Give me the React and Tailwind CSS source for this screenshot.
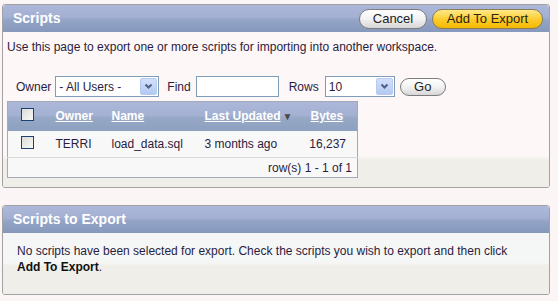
import React from 'react';

const font = { fontFamily: '"Liberation Sans", Arial, sans-serif' };

const Checkbox = () => (
  <span className="inline-block w-[13px] h-[13px] border border-[#1c4273] bg-[linear-gradient(135deg,#dcdcd6,#f8f8f6)]"></span>
);

const SelectBox = ({ value, width }) => (
  <div className={`flex items-center h-[21px] border border-[#7f9db9] bg-white pl-[3px] pr-[1px] ${width}`}>
    <span className="flex-1 text-[12px] text-[#2a1c40] leading-none">{value}</span>
    <span className="flex items-center justify-center w-[17px] h-[17px] rounded-[2px] border border-[#b8cbee] bg-[linear-gradient(to_bottom,#d3e0fb,#b3c9f3)]">
      <svg width="9" height="7" viewBox="0 0 9 7">
        <path d="M1.5 1.5 L4.5 4.5 L7.5 1.5" stroke="#4d6185" strokeWidth="2" fill="none" />
      </svg>
    </span>
  </div>
);

const PillButton = ({ children, yellow, className = '' }) => (
  <button
    className={`rounded-full border text-[13px] leading-none ${
      yellow
        ? 'border-[#8b7c52] bg-[linear-gradient(to_bottom,#ffe98a,#fccb2a_55%,#f5b800)] text-[#2a2410]'
        : 'border-[#7c7c7c] bg-[linear-gradient(to_bottom,#ffffff,#f2f2f2_50%,#d6d6d6)] text-[#222]'
    } ${className}`}
  >
    {children}
  </button>
);

const PanelHeader = ({ title, children }) => (
  <div className="flex items-center justify-between h-[27px] pl-[10px] pr-[6px] rounded-t-[3px] bg-[linear-gradient(to_bottom,#adb7da,#a3b0d2_45%,#93a4c6_55%,#8698bc)]">
    <span className="text-[14px] font-bold text-white">{title}</span>
    <div className="flex gap-[5px]">{children}</div>
  </div>
);

const App = () => {
  return (
    <div className="w-[558px] h-[301px] bg-[#fcf5f5] pt-[4px] pl-[2px] pr-[8px] overflow-hidden" style={font}>
      {/* Scripts region */}
      <div className="border border-[#a2a2a2] rounded-[3px] overflow-hidden">
        <PanelHeader title="Scripts">
          <PillButton className="w-[68px] h-[20px]">Cancel</PillButton>
          <PillButton yellow className="w-[111px] h-[20px]">Add To Export</PillButton>
        </PanelHeader>
        <div className="h-[155px] bg-[linear-gradient(to_top,#efeee8_26px,#f6f3ee_29px,#fdf7f7_31px)] pt-[8px] px-[4px]">
          <p className="text-[12px] text-[#2a1c40] leading-[14px]">
            Use this page to export one or more scripts for importing into another workspace.
          </p>
          <div className="flex items-center mt-[22px] pl-[9px] text-[12px] text-[#2a1c40]">
            <span>Owner</span>
            <SelectBox value="- All Users -" width="w-[104px] ml-[4px]" />
            <span className="ml-[8px]">Find</span>
            <input className="ml-[5px] w-[83px] h-[21px] border border-[#7f9db9] bg-white" />
            <span className="ml-[10px]">Rows</span>
            <SelectBox value="10" width="w-[70px] ml-[6px]" />
            <PillButton className="ml-[5px] w-[46px] h-[18px] text-[12px]">Go</PillButton>
          </div>
          <table className="mt-[4px] w-[351px] border border-[#a4a9b8] border-collapse text-[12px] text-[#2a1c40]">
            <thead>
              <tr className="h-[29px] bg-[linear-gradient(to_bottom,#acb7da,#a4b1d3_45%,#96a8c6_55%,#8da0bf)]">
                <th className="w-[40px] text-center pt-[2px]"><Checkbox /></th>
                <th className="w-[56px] text-left pl-[8px] font-bold"><span className="text-white underline">Owner</span></th>
                <th className="w-[93px] text-left pl-[8px] font-bold"><span className="text-white underline">Name</span></th>
                <th className="w-[106px] text-left pl-[8px] font-bold whitespace-nowrap">
                  <span className="text-white underline">Last Updated</span>
                  <span className="text-[#4a4a4a] text-[10px] ml-[2px]">▼</span>
                </th>
                <th className="text-left pl-[8px] font-bold"><span className="text-white underline">Bytes</span></th>
              </tr>
            </thead>
            <tbody className="bg-[#f8f8f8]">
              <tr className="h-[27px]">
                <td className="text-center pt-[2px]"><Checkbox /></td>
                <td className="pl-[8px]">TERRI</td>
                <td className="pl-[8px]">load_data.sql</td>
                <td className="pl-[8px]">3 months ago</td>
                <td className="text-right pr-[11px]">16,237</td>
              </tr>
              <tr className="h-[20px] border-t border-[#d8d8d8]">
                <td colSpan={5} className="text-right pr-[5px]">row(s) 1 - 1 of 1</td>
              </tr>
            </tbody>
          </table>
        </div>
      </div>

      {/* Scripts to Export region */}
      <div className="mt-[17px] border border-[#a2a2a2] rounded-[3px] overflow-hidden">
        <PanelHeader title="Scripts to Export" />
        <div className="h-[61px] bg-[linear-gradient(to_top,#efeee8_28px,#f6f5f2_31px,#f5f7f7_33px)] pt-[10px] pl-[14px] pr-[4px] text-[12px] leading-[16px] text-[#2a1c40]">
          <p>No scripts have been selected for export. Check the scripts you wish to export and then click</p>
          <p><b className="text-[#111]">Add To Export</b>.</p>
        </div>
      </div>
    </div>
  );
};

export default App;
